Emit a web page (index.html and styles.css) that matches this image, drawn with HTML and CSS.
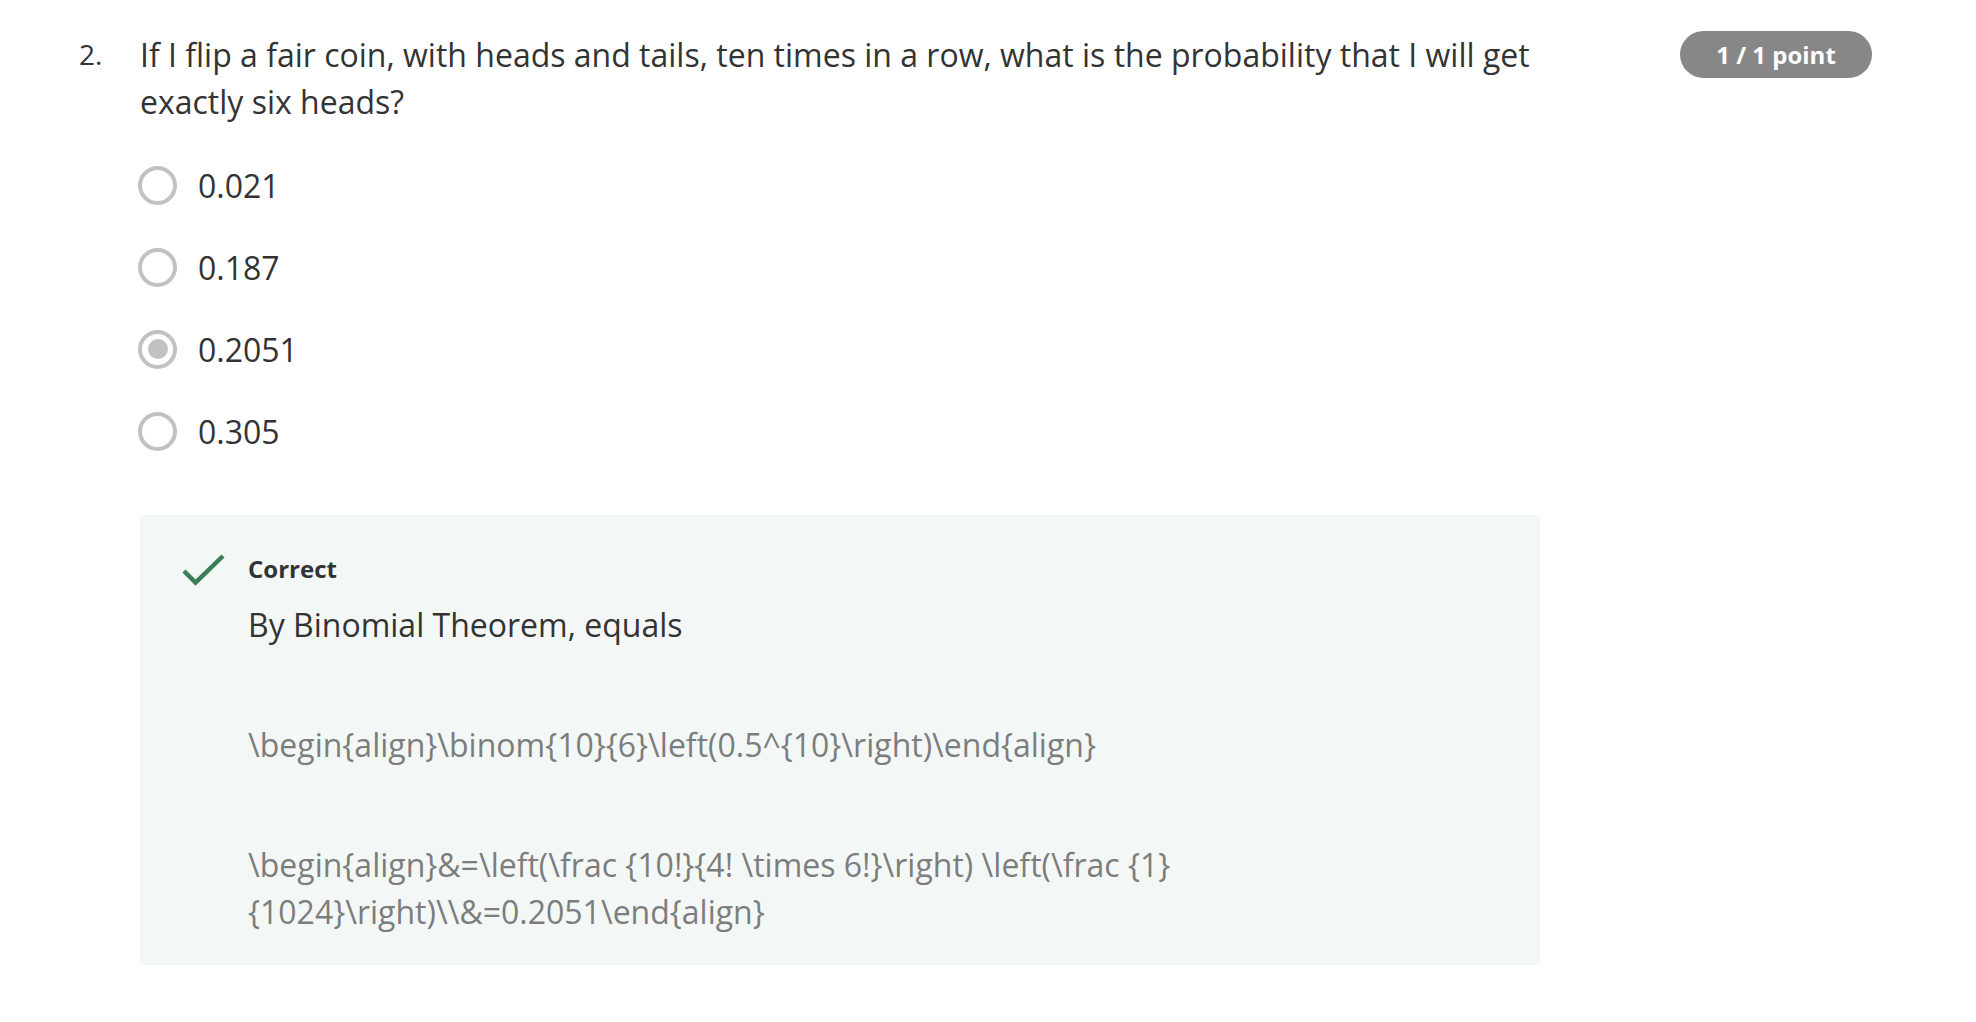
FILE: index.html
```html
<!DOCTYPE html>
<html lang="en">
<head>
<meta charset="utf-8">
<title>Quiz question</title>
<link rel="stylesheet" href="styles.css">
</head>
<body>
<div class="question">
  <div class="num">2.</div>
  <div class="body">
    <div class="prompt">If I flip a fair coin, with heads and tails, ten times in a row, what is the probability that I will get exactly six heads?</div>
    <div class="options">
      <div class="option"><span class="radio"></span><span class="label">0.021</span></div>
      <div class="option"><span class="radio"></span><span class="label">0.187</span></div>
      <div class="option"><span class="radio checked"></span><span class="label">0.2051</span></div>
      <div class="option"><span class="radio"></span><span class="label">0.305</span></div>
    </div>
    <div class="feedback">
      <div class="check">
        <svg width="44" height="34" viewBox="0 0 44 34"><path d="M2 17 L13.5 28.5 L41 2" fill="none" stroke="#3b7d57" stroke-width="4.5"/></svg>
      </div>
      <div class="fb-body">
        <div class="fb-title">Correct</div>
        <p class="fb-text">By Binomial Theorem, equals</p>
        <p class="fb-tex">\begin{align}\binom{10}{6}\left(0.5^{10}\right)\end{align}</p>
        <p class="fb-tex">\begin{align}&amp;=\left(\frac {10!}{4! \times 6!}\right) \left(\frac {1}{1024}\right)\\&amp;=0.2051\end{align}</p>
      </div>
    </div>
  </div>
  <div class="side">
    <span class="badge">1 / 1 point</span>
  </div>
</div>
</body>
</html>
```

FILE: styles.css
```css
html, body {
  margin: 0;
  padding: 0;
  background: #ffffff;
}
body {
  font-family: "Open Sans", "DejaVu Sans", sans-serif;
  color: #333333;
}
.question {
  display: flex;
  padding: 31px 104px 0 79px;
}
.num {
  width: 61px;
  flex: none;
  font-size: 28px;
  line-height: 47px;
  color: #333333;
}
.body {
  width: 1400px;
  flex: none;
}
.prompt {
  font-size: 32px;
  line-height: 47px;
  width: 1400px;
}
.options {
  margin-top: 19px;
}
.option {
  display: flex;
  align-items: center;
  height: 82px;
}
.radio {
  box-sizing: border-box;
  width: 39px;
  height: 39px;
  border: 4px solid #c1c1c1;
  border-radius: 50%;
  margin-left: -2px;
  margin-right: 21px;
  display: flex;
  align-items: center;
  justify-content: center;
  flex: none;
}
.radio.checked::after {
  content: "";
  width: 20px;
  height: 20px;
  border-radius: 50%;
  background: #c1c1c1;
}
.label {
  font-size: 32px;
  line-height: 47px;
}
.feedback {
  margin-top: 43px;
  background: #f3f8f6;
  display: flex;
  padding: 36px 0 30px 42px;
}
.check {
  width: 66px;
  flex: none;
  padding-top: 3px;
}
.fb-body {
  flex: 1;
}
.fb-title {
  font-size: 24px;
  font-weight: 700;
  line-height: 36px;
}
.fb-text {
  margin: 0;
  font-size: 32px;
  line-height: 47px;
  margin-top: 14px;
}
.fb-tex {
  margin: 73px 0 0;
  font-size: 32px;
  line-height: 47px;
  color: #7d7d7d;
  width: 990px;
}
.side {
  margin-left: auto;
}
.badge {
  display: inline-block;
  box-sizing: border-box;
  width: 192px;
  height: 47px;
  line-height: 47px;
  text-align: center;
  border-radius: 24px;
  background: #878787;
  color: #ffffff;
  font-weight: 700;
  font-size: 24px;
}
```
